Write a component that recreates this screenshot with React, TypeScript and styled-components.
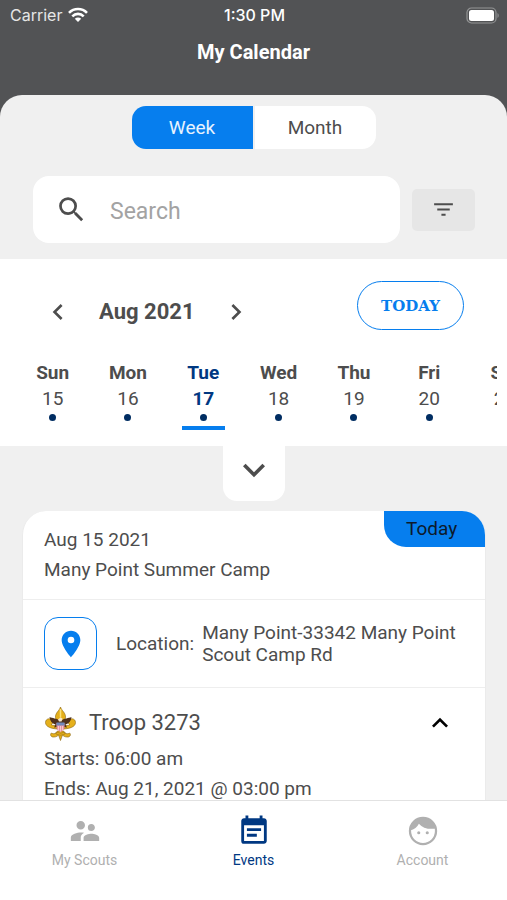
import React, { useState } from "react";
import styled, { createGlobalStyle } from "styled-components";
import {
  MdChevronLeft,
  MdChevronRight,
  MdEventNote,
  MdFilterList,
  MdKeyboardArrowDown,
  MdKeyboardArrowUp,
  MdLocationOn,
  MdSearch,
  MdSupervisorAccount,
} from "react-icons/md";

const color = {
  header: "#525355",
  page: "#f0f0f0",
  white: "#ffffff",
  text: "#4d4d4d",
  muted: "#b0b0b0",
  blue: "#067eee",
  navy: "#003882",
  dot: "#002d62",
  line: "#eeeeee",
};

const GlobalStyle = createGlobalStyle`
  * { box-sizing: border-box; }
  body { margin: 0; background: ${color.page}; }
  body, button, input { font-family: Roboto, "Liberation Sans", sans-serif; }
  button { margin: 0; padding: 0; border: 0; background: none; color: inherit; cursor: pointer; }
  h1, h2, h3, p { margin: 0; }
  svg { display: block; flex: none; }
`;

const Screen = styled.div`
  display: flex;
  flex-direction: column;
  height: 100vh;
  background: ${color.header};
  color: ${color.text};
  font-size: 19px;
`;

const StatusBar = styled.div`
  display: grid;
  grid-template-columns: 1fr auto 1fr;
  align-items: center;
  height: 30px;
  padding: 0 8px 0 10px;
  color: ${color.white};
  font-family: Inter, sans-serif;
  font-size: 16px;
`;

const Carrier = styled.div`
  display: flex;
  align-items: center;
  gap: 6px;
  color: #e6e6e6;
`;

const Clock = styled.time`
  font-weight: 500;
`;

const Battery = styled.svg`
  justify-self: end;
`;

const Title = styled.h1`
  padding: 8px 0 29px;
  color: ${color.white};
  font-size: 20px;
  font-weight: 700;
  line-height: 28px;
  text-align: center;
`;

const Sheet = styled.main`
  display: flex;
  flex: 1;
  flex-direction: column;
  min-height: 0;
  overflow: hidden;
  border-radius: 22px 22px 0 0;
  background: ${color.page};
`;

const Segments = styled.div`
  display: flex;
  flex: none;
  align-self: center;
  gap: 2px;
  margin-top: 11px;
  overflow: hidden;
  border-radius: 14px;
`;

const Segment = styled.button<{ $active: boolean }>`
  width: 121px;
  height: 43px;
  background: ${(p) => (p.$active ? color.blue : color.white)};
  color: ${(p) => (p.$active ? "#e8f3fe" : color.text)};
  font-size: 19px;
`;

const SearchRow = styled.div`
  display: flex;
  flex: none;
  align-items: center;
  gap: 12px;
  padding: 27px 32px 16px 33px;
`;

const SearchField = styled.label`
  display: flex;
  flex: 1;
  align-items: center;
  gap: 22px;
  min-width: 0;
  height: 67px;
  padding: 0 22px;
  border-radius: 16px;
  background: ${color.white};
`;

const SearchInput = styled.input`
  flex: 1;
  min-width: 0;
  padding: 4px 0 0;
  border: 0;
  outline: 0;
  background: none;
  color: ${color.text};
  font-size: 23px;
  &::placeholder {
    color: #a3a3a3;
    opacity: 1;
  }
`;

const FilterButton = styled.button`
  display: grid;
  place-items: center;
  width: 63px;
  height: 42px;
  border-radius: 5px;
  background: #e6e6e6;
`;

const Week = styled.section`
  flex: none;
  padding: 22px 10px 16px 15px;
  background: ${color.white};
`;

const MonthRow = styled.div`
  display: flex;
  align-items: flex-start;
  justify-content: space-between;
  padding: 0 33px 0 27px;
`;

const MonthPicker = styled.div`
  display: flex;
  align-items: center;
  gap: 25px;
  padding-top: 15px;
`;

const MonthName = styled.h2`
  font-size: 22px;
  font-weight: 700;
  line-height: 32px;
`;

const TodayButton = styled.button`
  width: 107px;
  height: 49px;
  border: 1px solid ${color.blue};
  border-radius: 25px;
  color: ${color.blue};
  font-family: "Roboto Slab", "DejaVu Serif", serif;
  font-size: 15px;
  font-weight: 700;
`;

const Days = styled.div`
  display: flex;
  margin-top: 30px;
  overflow: hidden;
`;

const Day = styled.button<{ $active: boolean }>`
  display: flex;
  flex: 0 0 calc(100% * 5 / 32);
  flex-direction: column;
  align-items: center;
  color: ${(p) => (p.$active ? color.navy : color.text)};
  font-size: 19px;
  line-height: 26px;
`;

const DayName = styled.span`
  font-weight: 700;
`;

const DayNumber = styled.span<{ $active: boolean }>`
  font-weight: ${(p) => (p.$active ? 700 : 400)};
`;

const Dot = styled.span`
  width: 7px;
  height: 7px;
  margin-top: 2px;
  border-radius: 50%;
  background: ${color.dot};
`;

const Underline = styled.span<{ $active: boolean }>`
  width: 43px;
  height: 4px;
  margin-top: 5px;
  background: ${(p) => (p.$active ? color.blue : "transparent")};
`;

const Expander = styled.button`
  display: grid;
  flex: none;
  align-self: center;
  place-items: center;
  width: 62px;
  height: 55px;
  padding-bottom: 8px;
  border-radius: 0 0 14px 14px;
  background: ${color.white};
`;

const EventList = styled.div`
  flex: 1;
  min-height: 0;
  overflow: hidden;
  padding: 10px 21px 0 22px;
`;

const Card = styled.article`
  overflow: hidden;
  border: 1px solid #ebebeb;
  border-top: 0;
  border-radius: 24px 24px 0 0;
  background: ${color.white};
`;

const CardHead = styled.header`
  display: flex;
  align-items: flex-start;
  justify-content: space-between;
  height: 89px;
  padding-left: 21px;
  border-bottom: 1px solid ${color.line};
`;

const Lines = styled.div`
  padding-top: 14px;
  line-height: 30px;
`;

const Badge = styled.span`
  width: 101px;
  padding-left: 22px;
  border-radius: 0 0 0 22px;
  background: ${color.blue};
  color: #0d1a2b;
  line-height: 36px;
`;

const Place = styled.div`
  display: flex;
  align-items: center;
  height: 88px;
  padding: 0 21px;
  border-bottom: 1px solid ${color.line};
  line-height: 22px;
`;

const PinButton = styled.button`
  display: grid;
  flex: none;
  place-items: center;
  width: 53px;
  height: 53px;
  margin-right: 19px;
  border: 1px solid ${color.blue};
  border-radius: 14px;
  color: ${color.blue};
`;

const PlaceLabel = styled.span`
  margin-right: 8px;
`;

const Unit = styled.div`
  padding: 14px 29px 14px 21px;
  line-height: 30px;
`;

const UnitHead = styled.div`
  display: flex;
  align-items: center;
  height: 42px;
`;

const UnitName = styled.h3`
  flex: 1;
  margin-left: 12px;
  font-size: 22px;
  font-weight: 400;
`;

const CollapseButton = styled.button`
  color: #000000;
`;

const TabBar = styled.nav`
  display: grid;
  flex: none;
  grid-template-columns: repeat(3, 1fr);
  height: 100px;
  border-top: 1px solid #e2e2e2;
  background: ${color.white};
`;

const Tab = styled.a<{ $active?: boolean }>`
  display: flex;
  flex-direction: column;
  align-items: center;
  gap: 2px;
  padding-top: 13px;
  color: ${(p) => (p.$active ? color.navy : color.muted)};
  font-size: 14px;
  line-height: 20px;
  text-decoration: none;
`;

const WifiIcon = () => (
  <svg width="20" height="16" viewBox="0 0 20 16" aria-hidden="true">
    <g fill="none" stroke="#fff" strokeWidth="2.6">
      <path d="M1 5.8C6 .7 14 .7 19 5.8" />
      <path d="M4.3 9.3c3.2-3.2 8.2-3.2 11.4 0" />
    </g>
    <path d="M10 15l-3.2-3.3c1.8-1.7 4.6-1.7 6.4 0z" fill="#fff" />
  </svg>
);

const BatteryIcon = () => (
  <Battery width="33" height="17" viewBox="0 0 33 17" role="img" aria-label="Battery full">
    <rect x="1" y="1" width="29" height="15" rx="4.5" fill="none" stroke="#949596" strokeWidth="1.2" />
    <rect x="3" y="3" width="25" height="11" rx="2.5" fill="#fff" />
    <path d="M31.5 6v5c1.600-.7 1.600-4.300 0-5z" fill="#949596" />
  </Battery>
);

const FaceIcon = () => (
  <svg width="34" height="34" viewBox="0 0 24 24" fill="currentColor" aria-hidden="true">
    <circle cx="12" cy="12" r="9.2" fill="none" stroke="currentColor" strokeWidth="1.6" />
    <path d="M2.800 11.600C5.900 10.800 8 9.200 9.100 6.800c2.500 2.900 6.500 4.200 12 3.500C20.200 5.900 16.500 2.600 12 2.600c-5 0-9.200 3.900-9.200 9z" />
    <circle cx="9" cy="13.200" r="1.100" />
    <circle cx="15" cy="13.200" r="1.100" />
  </svg>
);

const ScoutEmblem = () => (
  <svg width="33" height="35" viewBox="0 0 66 70" role="img" aria-label="Scout emblem">
    <g fill="#e5b01c" stroke="#8a6412" strokeWidth="1.2" strokeLinejoin="round">
      <path d="M33 2c2 7 11 12 10 21-1 8-4 11-4 20H27c0-9-3-12-4-20-1-9 8-14 10-21z" />
      <path d="M26 46C15 45 3 42 3 33c0-9 12-10 14-2 1 4-1 6-3 6 4 3 8 2 12 1z" />
      <path d="M40 46c11-1 23-4 23-13 0-9-12-10-14-2-1 4 1 6 3 6-4 3-8 2-12 1z" />
      <path d="M27 50c-2 5-8 7-12 4-4 3-1 9 5 8 4 0 7-2 9-4l4 11 4-11c2 2 5 4 9 4 6 1 9-5 5-8-4 3-10 1-12-4z" />
    </g>
    <path d="M33 6v17" stroke="#fbe07a" strokeWidth="3" />
    <path d="M31 29c-6-5-14-4-20-7 1 8 5 13 12 15l-3 6 6-1 2 6h10l2-6 6 1-3-6c7-2 11-7 12-15-6 3-14 2-20 7z" fill="#4f301b" />
    <path d="M28 27l5-4 4 2-2 6h-5z" fill="#f7e7cf" />
    <path d="M25 34h16v9c0 5-4 7-8 9-4-2-8-4-8-9z" fill="#e892a0" />
    <path d="M25 33h16v6H25z" fill="#6f87bd" />
    <path d="M29 40v9M33 40v11M37 40v9" stroke="#fff" strokeWidth="1" />
    <path d="M24 52q9 5 18 0v4q-9 5-18 0z" fill="#e5b01c" stroke="#8a6412" />
  </svg>
);

const days = [
  { name: "Sun", date: 15 },
  { name: "Mon", date: 16 },
  { name: "Tue", date: 17 },
  { name: "Wed", date: 18 },
  { name: "Thu", date: 19 },
  { name: "Fri", date: 20 },
  { name: "Sat", date: 21 },
];

export default function App() {
  const [view, setView] = useState("Week");
  const [selected, setSelected] = useState(17);

  return (
    <>
      <GlobalStyle />
      <Screen>
        <StatusBar>
          <Carrier>
            Carrier
            <WifiIcon />
          </Carrier>
          <Clock>1:30 PM</Clock>
          <BatteryIcon />
        </StatusBar>
        <Title>My Calendar</Title>

        <Sheet>
          <Segments role="group" aria-label="Calendar view">
            {["Week", "Month"].map((name) => (
              <Segment
                key={name}
                type="button"
                $active={view === name}
                aria-pressed={view === name}
                onClick={() => setView(name)}
              >
                {name}
              </Segment>
            ))}
          </Segments>

          <SearchRow>
            <SearchField>
              <MdSearch size={33} />
              <SearchInput type="search" placeholder="Search" aria-label="Search" />
            </SearchField>
            <FilterButton type="button" aria-label="Filter">
              <MdFilterList size={25} />
            </FilterButton>
          </SearchRow>

          <Week>
            <MonthRow>
              <MonthPicker>
                <button type="button" aria-label="Previous month">
                  <MdChevronLeft size={32} />
                </button>
                <MonthName>Aug 2021</MonthName>
                <button type="button" aria-label="Next month">
                  <MdChevronRight size={32} />
                </button>
              </MonthPicker>
              <TodayButton type="button" onClick={() => setSelected(17)}>
                TODAY
              </TodayButton>
            </MonthRow>
            <Days>
              {days.map(({ name, date }) => (
                <Day
                  key={date}
                  type="button"
                  $active={selected === date}
                  aria-pressed={selected === date}
                  onClick={() => setSelected(date)}
                >
                  <DayName>{name}</DayName>
                  <DayNumber $active={selected === date}>{date}</DayNumber>
                  <Dot />
                  <Underline $active={selected === date} />
                </Day>
              ))}
            </Days>
          </Week>

          <Expander type="button" aria-label="Expand calendar">
            <MdKeyboardArrowDown size={44} />
          </Expander>

          <EventList>
            <Card>
              <CardHead>
                <Lines>
                  <p>Aug 15 2021</p>
                  <p>Many Point Summer Camp</p>
                </Lines>
                <Badge>Today</Badge>
              </CardHead>
              <Place>
                <PinButton type="button" aria-label="Open map">
                  <MdLocationOn size={32} />
                </PinButton>
                <PlaceLabel>Location:</PlaceLabel>
                <p>Many Point-33342 Many Point Scout Camp Rd</p>
              </Place>
              <Unit>
                <UnitHead>
                  <ScoutEmblem />
                  <UnitName>Troop 3273</UnitName>
                  <CollapseButton type="button" aria-label="Collapse troop details">
                    <MdKeyboardArrowUp size={32} />
                  </CollapseButton>
                </UnitHead>
                <p>Starts: 06:00 am</p>
                <p>Ends: Aug 21, 2021 @ 03:00 pm</p>
              </Unit>
            </Card>
          </EventList>
        </Sheet>

        <TabBar>
          <Tab href="#scouts">
            <MdSupervisorAccount size={34} />
            My Scouts
          </Tab>
          <Tab href="#events" $active aria-current="page">
            <MdEventNote size={34} />
            Events
          </Tab>
          <Tab href="#account">
            <FaceIcon />
            Account
          </Tab>
        </TabBar>
      </Screen>
    </>
  );
}
